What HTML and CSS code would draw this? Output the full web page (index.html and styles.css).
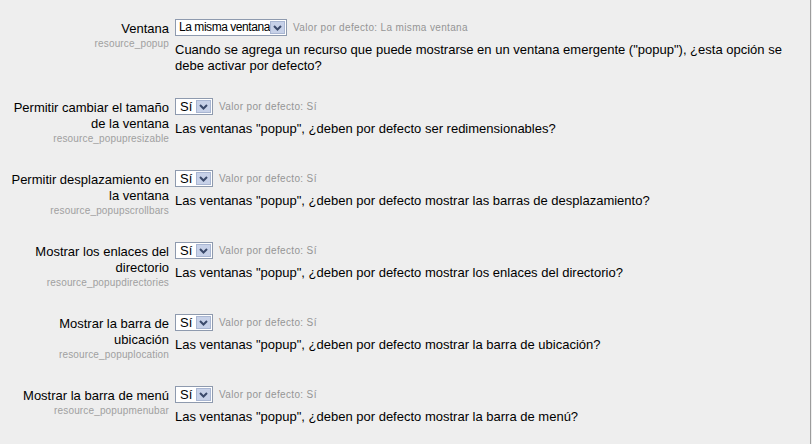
FILE: index.html
```html
<!DOCTYPE html>
<html lang="es">
<head>
<meta charset="utf-8">
<title>Ajustes de recurso</title>
<link rel="stylesheet" href="styles.css">
</head>
<body>
<div class="page">

  <div class="item">
    <div class="label">Ventana<span class="shortname">resource_popup</span></div>
    <div class="setting">
      <div class="control">
        <span class="select wide"><span class="value">La misma ventana</span><span class="arrow"><svg width="9" height="6" viewBox="0 0 9 6"><path d="M1 1 L4.5 4.5 L8 1" fill="none" stroke="#3b4a6b" stroke-width="2"/></svg></span></span>
        <span class="default">Valor por defecto: La misma ventana</span>
      </div>
      <p class="desc">Cuando se agrega un recurso que puede mostrarse en un ventana emergente ("popup"), ¿esta opción se debe activar por defecto?</p>
    </div>
  </div>

  <div class="item">
    <div class="label">Permitir cambiar el tamaño de la ventana<span class="shortname">resource_popupresizable</span></div>
    <div class="setting">
      <div class="control">
        <span class="select"><span class="value">Sí</span><span class="arrow"><svg width="9" height="6" viewBox="0 0 9 6"><path d="M1 1 L4.5 4.5 L8 1" fill="none" stroke="#3b4a6b" stroke-width="2"/></svg></span></span>
        <span class="default">Valor por defecto: Sí</span>
      </div>
      <p class="desc">Las ventanas "popup", ¿deben por defecto ser redimensionables?</p>
    </div>
  </div>

  <div class="item">
    <div class="label">Permitir desplazamiento en la ventana<span class="shortname">resource_popupscrollbars</span></div>
    <div class="setting">
      <div class="control">
        <span class="select"><span class="value">Sí</span><span class="arrow"><svg width="9" height="6" viewBox="0 0 9 6"><path d="M1 1 L4.5 4.5 L8 1" fill="none" stroke="#3b4a6b" stroke-width="2"/></svg></span></span>
        <span class="default">Valor por defecto: Sí</span>
      </div>
      <p class="desc">Las ventanas "popup", ¿deben por defecto mostrar las barras de desplazamiento?</p>
    </div>
  </div>

  <div class="item">
    <div class="label">Mostrar los enlaces del directorio<span class="shortname">resource_popupdirectories</span></div>
    <div class="setting">
      <div class="control">
        <span class="select"><span class="value">Sí</span><span class="arrow"><svg width="9" height="6" viewBox="0 0 9 6"><path d="M1 1 L4.5 4.5 L8 1" fill="none" stroke="#3b4a6b" stroke-width="2"/></svg></span></span>
        <span class="default">Valor por defecto: Sí</span>
      </div>
      <p class="desc">Las ventanas "popup", ¿deben por defecto mostrar los enlaces del directorio?</p>
    </div>
  </div>

  <div class="item">
    <div class="label">Mostrar la barra de ubicación<span class="shortname">resource_popuplocation</span></div>
    <div class="setting">
      <div class="control">
        <span class="select"><span class="value">Sí</span><span class="arrow"><svg width="9" height="6" viewBox="0 0 9 6"><path d="M1 1 L4.5 4.5 L8 1" fill="none" stroke="#3b4a6b" stroke-width="2"/></svg></span></span>
        <span class="default">Valor por defecto: Sí</span>
      </div>
      <p class="desc">Las ventanas "popup", ¿deben por defecto mostrar la barra de ubicación?</p>
    </div>
  </div>

  <div class="item">
    <div class="label">Mostrar la barra de menú<span class="shortname">resource_popupmenubar</span></div>
    <div class="setting">
      <div class="control">
        <span class="select"><span class="value">Sí</span><span class="arrow"><svg width="9" height="6" viewBox="0 0 9 6"><path d="M1 1 L4.5 4.5 L8 1" fill="none" stroke="#3b4a6b" stroke-width="2"/></svg></span></span>
        <span class="default">Valor por defecto: Sí</span>
      </div>
      <p class="desc">Las ventanas "popup", ¿deben por defecto mostrar la barra de menú?</p>
    </div>
  </div>

</div>
</body>
</html>
```

FILE: styles.css
```css
html, body {
  margin: 0;
  padding: 0;
  background: #eeeeee;
}

body {
  font-family: "Liberation Sans", Arial, sans-serif;
  font-size: 13px;
  color: #000;
}

.page {
  box-sizing: border-box;
  width: 811px;
  min-height: 444px;
  border-right: 1px solid #9c9c9c;
  padding-top: 19px;
}

.item {
  display: grid;
  grid-template-columns: 160px 1fr;
  column-gap: 6px;
  padding-left: 9px;
  margin-bottom: 24px;
}

.label {
  text-align: right;
  line-height: 16px;
  padding-top: 2px;
}

.shortname {
  display: block;
  font-size: 10px;
  line-height: 14px;
  color: #a0a0a0;
  letter-spacing: 0.15px;
}

.setting {
  display: flex;
  flex-direction: column;
}

.control {
  display: flex;
  align-items: center;
  height: 19px;
  align-self: flex-start;
  margin-top: -1px;
}

.select {
  box-sizing: border-box;
  display: inline-flex;
  align-items: stretch;
  height: 17px;
  width: 38px;
  padding: 1px;
  border: 1px solid #8e9aae;
  background: #fff;
}

.select.wide {
  width: 112px;
}

.value {
  flex: 1;
  padding-left: 3px;
  line-height: 13px;
  font-size: 13px;
  white-space: nowrap;
  overflow: hidden;
}

.wide .value {
  font-size: 12px;
  letter-spacing: -0.45px;
  padding-left: 2px;
}

.arrow {
  box-sizing: border-box;
  width: 15px;
  display: flex;
  align-items: center;
  justify-content: center;
  background: #c7d1e8;
  border: 1px solid #a9b6d2;
}

.default {
  margin-left: 6px;
  font-size: 10px;
  color: #959595;
  letter-spacing: 0.35px;
}

.desc {
  margin: 5px 0 0;
  line-height: 16px;
  max-width: 620px;
}
```
